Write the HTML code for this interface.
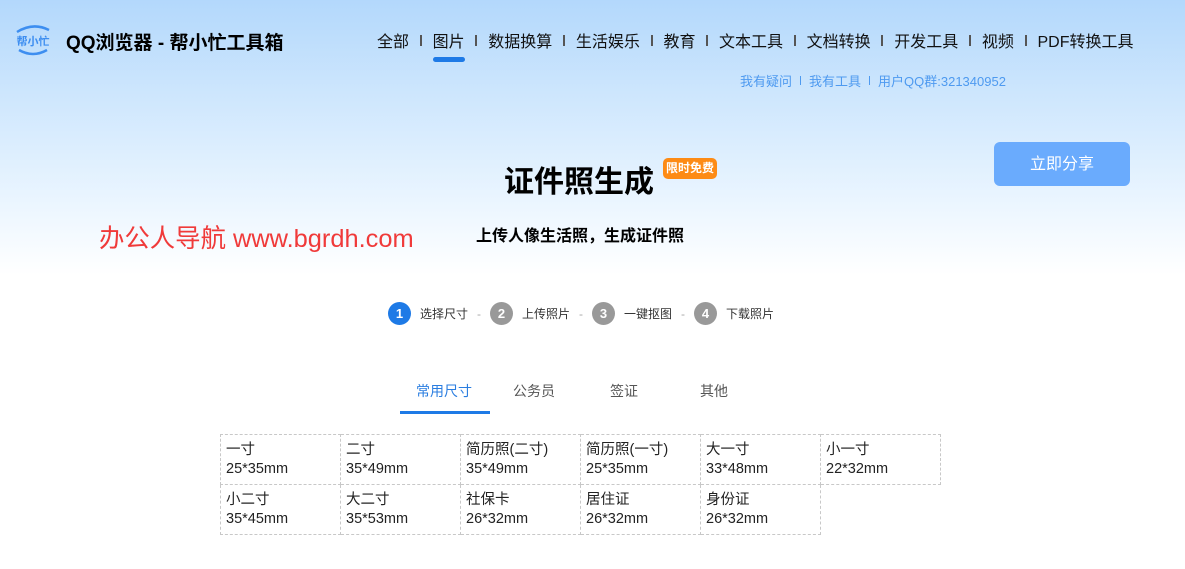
<!DOCTYPE html>
<html><head><meta charset="utf-8"><style>
*{margin:0;padding:0;box-sizing:border-box}
body{width:1185px;height:569px;overflow:hidden;position:relative;font-family:"Liberation Sans","Noto Sans CJK SC",sans-serif;background:linear-gradient(180deg,#b3d8fc 0px,#cfe7fd 100px,#eaf5ff 200px,#fff 275px,#fff 569px);color:#000}
.a{position:absolute;white-space:nowrap}
.nav{font-size:16px;top:28px;left:377px;color:#111}
.sep{display:inline-block;width:2px;height:11px;background:#555;margin:0 10.8px;vertical-align:1px}
.sub{top:71px;left:740px;font-size:13px;color:#4e9af0}
.sub .sep{background:#4e9af0;width:1px;height:9px;margin:0 8px}
.step{top:302px;font-size:12px;color:#333;display:flex;align-items:center}
.c{width:23px;height:23px;border-radius:50%;background:#999;color:#fff;font-size:13px;font-weight:bold;display:flex;align-items:center;justify-content:center;margin-right:9px}
.dash{color:#aaa;margin:0 9px}
.tab{top:381px;font-size:14px;color:#555}
table{position:absolute;left:220px;top:434px;border-collapse:collapse}
td{border:1px dashed #c8c8c8;width:120px;height:50px;font-size:14.5px;line-height:19px;padding:6px 5px 0;vertical-align:top;color:#222}
</style></head><body>
<svg class="a" style="left:13px;top:24px" width="40" height="32" viewBox="0 0 40 32"><path d="M4 8 Q20 -2 36 6" stroke="#3d8ef0" stroke-width="2.5" fill="none"/><path d="M6 26 Q20 34 34 26" stroke="#3d8ef0" stroke-width="2.5" fill="none"/><text x="20" y="21" font-size="11" font-weight="bold" fill="#3d8ef0" text-anchor="middle" font-family="Noto Sans CJK SC">帮小忙</text></svg>
<div class="a" style="left:66px;top:28px;font-size:19px;font-weight:bold">QQ浏览器 - 帮小忙工具箱</div>
<div class="a nav">全部<i class="sep"></i><span style="position:relative">图片<b style="position:absolute;left:0;right:0;top:23px;height:5px;border-radius:3px;background:#1e7ae6"></b></span><i class="sep"></i>数据换算<i class="sep"></i>生活娱乐<i class="sep"></i>教育<i class="sep"></i>文本工具<i class="sep"></i>文档转换<i class="sep"></i>开发工具<i class="sep"></i>视频<i class="sep"></i>PDF转换工具</div>
<div class="a sub">我有疑问<i class="sep"></i>我有工具<i class="sep"></i>用户QQ群:321340952</div>
<div class="a" style="left:994px;top:142px;width:136px;height:44px;border-radius:6px;background:#6aabfd;color:#fff;font-size:16px;text-align:center;line-height:46px">立即分享</div>
<div class="a" style="left:504px;top:157px;font-size:30px;font-weight:bold">证件照生成</div>
<div class="a" style="left:663px;top:158px;background:#fd8b15;color:#fff;font-size:12px;font-weight:bold;border-radius:5px;padding:2px 3px;line-height:17px">限时免费</div>
<div class="a" style="left:99px;top:219px;font-size:25.4px;color:#f03a3a">办公人导航 www.bgrdh.com</div>
<div class="a" style="left:476px;top:222px;font-size:16px;font-weight:bold">上传人像生活照，生成证件照</div>
<div class="a step" style="left:388px"><span class="c" style="background:#1e7ae6">1</span>选择尺寸<span class="dash">-</span><span class="c">2</span>上传照片<span class="dash">-</span><span class="c">3</span>一键抠图<span class="dash">-</span><span class="c">4</span>下载照片</div>
<div class="a tab" style="left:416px;color:#2a7de0">常用尺寸</div>
<div class="a" style="left:400px;top:411px;width:90px;height:3px;background:#1e7ae6"></div>
<div class="a tab" style="left:513px">公务员</div>
<div class="a tab" style="left:610px">签证</div>
<div class="a tab" style="left:700px">其他</div>
<table>
<tr><td>一寸<br>25*35mm</td><td>二寸<br>35*49mm</td><td>简历照(二寸)<br>35*49mm</td><td>简历照(一寸)<br>25*35mm</td><td>大一寸<br>33*48mm</td><td>小一寸<br>22*32mm</td></tr>
<tr><td>小二寸<br>35*45mm</td><td>大二寸<br>35*53mm</td><td>社保卡<br>26*32mm</td><td>居住证<br>26*32mm</td><td>身份证<br>26*32mm</td><td style="border:none"></td></tr>
</table>
</body></html>
